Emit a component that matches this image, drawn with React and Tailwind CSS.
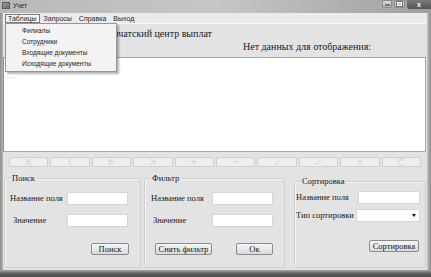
import React from "react";

const navGlyphs = [
  <path key="a" d="M3 2v6M8 2L4 5l4 3" />,
  <path key="b" d="M7 2L3 5l4 3" />,
  <path key="c" d="M3 2v6l4-3z" />,
  <path key="d" d="M2 2l4 3-4 3M7 2v6" />,
  <path key="e" d="M5 2v6M2 5h6" />,
  <path key="f" d="M2 5h6" />,
  <path key="g" d="M3 8l4-5" />,
  <path key="h" d="M2 6l2 2 4-5" />,
  <path key="i" d="M3 2l4 6M7 2L3 8" />,
  <path key="j" d="M7 3A3 3 0 1 0 7 7M7 1v2H5" />,
];

function NavButton({ i }) {
  return (
    <div className="h-[10px] flex items-center justify-center bg-[#eeeeee] border border-[#d0d0d0] rounded-[1px]">
      <svg width="10" height="10" viewBox="0 0 10 10" fill="none" stroke="#c6c6c6" strokeWidth="0.7">
        {navGlyphs[i]}
      </svg>
    </div>
  );
}

function Input({ w }) {
  return <div className={`${w} h-[13px] bg-white border border-[#d6d6d6]`} />;
}

function Btn({ children, w, h = "h-[12px]" }) {
  return (
    <div
      className={`${w} ${h} flex items-center justify-center border border-[#8a8a8a] rounded-[2px] bg-gradient-to-b from-[#f6f6f6] to-[#dadada] text-[8.5px] leading-none text-[#1a1a1a]`}
    >
      {children}
    </div>
  );
}

function Group({ title, className, children }) {
  return (
    <div className={`relative border border-[#cfcfcf] rounded-[2px] shadow-[inset_1px_1px_0_#f4f4f4] ${className}`}>
      <span className="absolute left-[6px] top-[-6px] px-[1px] bg-[#e3e3e3] text-[8.5px] leading-[10px] text-[#1a1a1a]">
        {title}
      </span>
      {children}
    </div>
  );
}

export default function App() {
  return (
    <div className="w-[431px] h-[277px] flex flex-col overflow-hidden bg-[#6a6a6a] font-['Liberation_Serif',serif] text-[#1a1a1a]">
      {/* Title bar */}
      <div className="h-[13px] flex items-start bg-gradient-to-r from-[#b8b8b8] via-[#c6c6c6] to-[#a0a0a0]">
        <div className="ml-[2px] mt-[2px] w-[8px] h-[7px] bg-gradient-to-br from-[#9a9a9a] to-[#6e6e6e] border border-[#5e5e5e]" />
        <span className="ml-[3px] mt-[1px] font-['Liberation_Sans',sans-serif] text-[6.5px] leading-[9px] text-[#222]">Учет</span>
        <div className="ml-auto flex items-start">
          <div className="w-[10px] h-[8px] border border-[#8a8a8a] rounded-b-[2px] bg-gradient-to-b from-[#dadada] to-[#b4b4b4] flex items-end justify-center pb-[1px]">
            <div className="w-[5px] h-[1.5px] bg-[#f2f2f2] border-[0.5px] border-[#777]" />
          </div>
          <div className="ml-[2px] w-[11px] h-[8px] border border-[#8a8a8a] rounded-b-[2px] bg-gradient-to-b from-[#dadada] to-[#b4b4b4] flex items-center justify-center">
            <div className="w-[5px] h-[4px] border border-[#f2f2f2] outline outline-[0.5px] outline-[#777]" />
          </div>
          <div className="ml-[2px] w-[24px] h-[9px] rounded-bl-[2px] bg-gradient-to-b from-[#7a7a7a] to-[#555] flex items-center justify-center font-['Liberation_Sans',sans-serif] text-[7px] leading-none text-white font-bold">
            x
          </div>
        </div>
      </div>

      <div className="flex h-[257px]">
        <div className="w-[3px] bg-gradient-to-r from-[#8e8e8e] to-[#b4b4b4]" />
        <div className="flex-1 relative flex flex-col bg-[#e3e3e3]">
          {/* Menu bar */}
          <div className="h-[11px] flex items-center bg-[#ebebeb] border-b border-[#f8f8f8] font-['Liberation_Sans',sans-serif] text-[7px] leading-none text-[#1f1f1f]">
            <span className="ml-[2px] h-[9px] px-[2px] flex items-center border border-[#7d7d7d] bg-[#f4f4f4]">Таблицы</span>
            <span className="ml-[3px] px-[1px]">Запросы</span>
            <span className="ml-[5px] px-[1px]">Справка</span>
            <span className="ml-[5px] px-[1px]">Выход</span>
          </div>

          {/* Header */}
          <div className="pt-[4px] pl-[98px] text-[10px] leading-[12px] whitespace-nowrap">Камчатский центр выплат</div>
          <div className="mt-[1px] pl-[240px] text-[10px] leading-[12px] whitespace-nowrap">Нет данных для отображения:</div>

          {/* List */}
          <div className="mt-[4px] mr-[1px] h-[95px] bg-white border border-[#a9a9a9] border-l-[#8f8f8f]">
            <div className="mt-[17px] ml-[1px] w-[12px] h-[3px] bg-white border-b border-[#e6e6e6]" />
          </div>

          {/* Nav buttons */}
          <div className="mt-[5px] ml-[6px] w-[412px] grid grid-cols-10 gap-x-[2px]">
            {Array.from({ length: 10 }, (_, i) => (
              <NavButton key={i} i={i} />
            ))}
          </div>

          {/* Groups */}
          <div className="mt-[11px] flex items-start">
            <Group title="Поиск" className="ml-[1px] w-[137px] h-[90px]">
              <div className="pt-[13px] flex flex-col">
                <div className="flex items-center h-[13px]">
                  <span className="w-[62px] pl-[5px] text-[8.5px] leading-none whitespace-nowrap">Название поля</span>
                  <Input w="w-[61px]" />
                </div>
                <div className="mt-[9px] flex items-center h-[13px]">
                  <span className="w-[62px] pl-[8px] text-[8.5px] leading-none">Значение</span>
                  <Input w="w-[61px]" />
                </div>
                <div className="mt-[16px] flex">
                  <div className="ml-[86px]">
                    <Btn w="w-[38px]">Поиск</Btn>
                  </div>
                </div>
              </div>
            </Group>

            <Group title="Фильтр" className="ml-[3px] w-[141px] h-[90px]">
              <div className="pt-[13px] flex flex-col">
                <div className="flex items-center h-[13px]">
                  <span className="w-[67px] pl-[6px] text-[8.5px] leading-none whitespace-nowrap">Название поля</span>
                  <Input w="w-[61px]" />
                </div>
                <div className="mt-[9px] flex items-center h-[13px]">
                  <span className="w-[67px] pl-[8px] text-[8.5px] leading-none">Значение</span>
                  <Input w="w-[61px]" />
                </div>
                <div className="mt-[16px] flex">
                  <div className="ml-[10px]">
                    <Btn w="w-[57px]">Снять фильтр</Btn>
                  </div>
                  <div className="ml-[24px]">
                    <Btn w="w-[37px]">Ок</Btn>
                  </div>
                </div>
              </div>
            </Group>

            <Group title="Сортировка" className="ml-[9px] mt-[3px] w-[132px] h-[87px]">
              <div className="pt-[9px] flex flex-col">
                <div className="flex items-center h-[13px]">
                  <span className="w-[63px] pl-[1px] text-[8.5px] leading-none whitespace-nowrap">Название поля</span>
                  <Input w="w-[62px]" />
                </div>
                <div className="mt-[5px] flex items-center h-[13px]">
                  <span className="w-[61px] pl-[1px] text-[8.5px] leading-none whitespace-nowrap">Тип сортировки</span>
                  <div className="w-[64px] h-[13px] bg-white border border-[#d6d6d6] flex items-center justify-end pr-[3px]">
                    <svg width="4" height="3" viewBox="0 0 4 3"><path d="M0 0h4L2 3z" fill="#111" /></svg>
                  </div>
                </div>
                <div className="mt-[18px] flex">
                  <div className="ml-[74px]">
                    <Btn w="w-[50px]">Сортировка</Btn>
                  </div>
                </div>
              </div>
            </Group>
          </div>

          {/* Dropdown menu overlay */}
          <div className="absolute left-[2px] top-[10px] w-[112px] h-[49px] bg-[#f3f3f3] border border-[#979797] shadow-[2px_2px_2px_rgba(0,0,0,0.3)] py-[2px] font-['Liberation_Sans',sans-serif] text-[6.5px] text-[#1f1f1f]">
            {["Филиалы", "Сотрудники", "Входящие документы", "Исходящие документы"].map((t) => (
              <div key={t} className="h-[11px] flex items-center pl-[16px] leading-none whitespace-nowrap">
                {t}
              </div>
            ))}
          </div>
        </div>
        <div className="w-[4px] bg-gradient-to-r from-[#c4c4c4] to-[#8a8a8a]" />
      </div>

      <div className="h-[7px] bg-gradient-to-b from-[#a9a9a9] via-[#5e5e5e] to-[#4a4a4a]" />
    </div>
  );
}
